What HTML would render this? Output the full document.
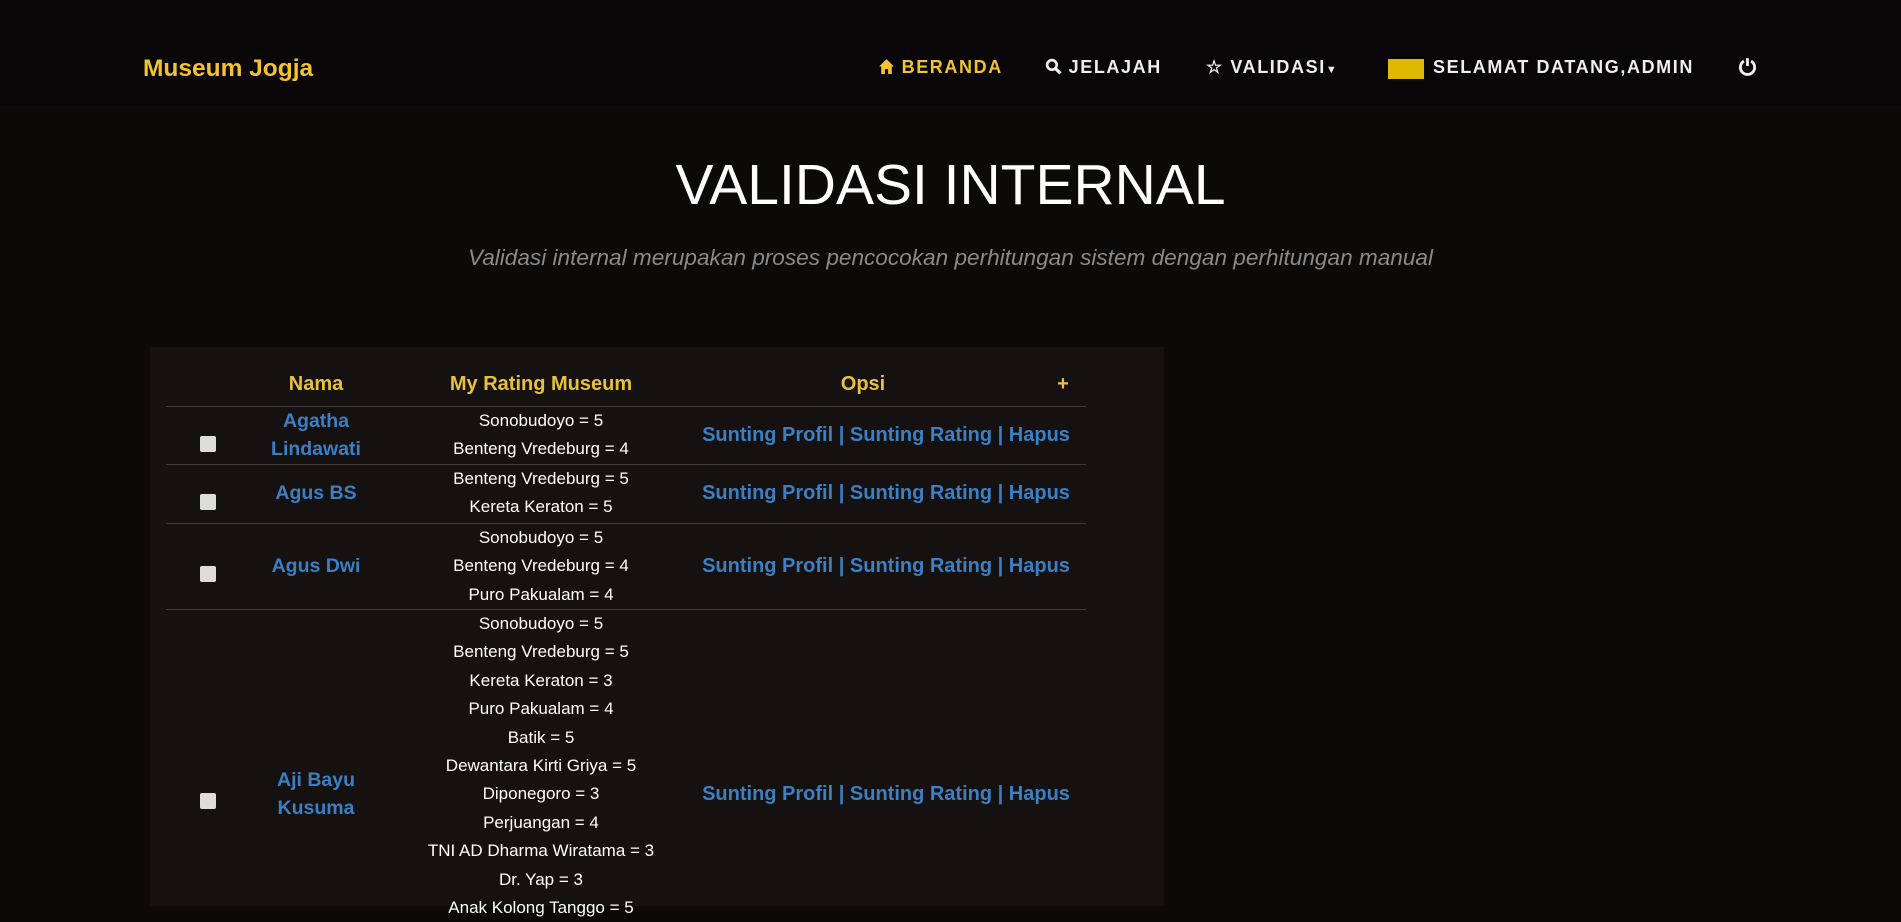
<!DOCTYPE html>
<html><head><meta charset="utf-8"><style>
*{margin:0;padding:0;box-sizing:border-box}
body{width:1901px;height:906px;overflow:hidden;background:#0c0909;font-family:"Liberation Sans",Arial,sans-serif;position:relative}
.top{position:absolute;left:0;top:0;width:1901px;height:105px;background:#080606}
.a{position:absolute;white-space:nowrap}
.brand{left:143px;top:55px;font-size:24.5px;font-weight:bold;color:#f2c230}
.nav{top:57px;font-size:18px;font-weight:bold;letter-spacing:1.6px;color:#eee}
h1{position:absolute;left:0;width:1901px;top:152px;text-align:center;font-weight:normal;font-size:57px;color:#fff}
.sub{left:0;width:1901px;text-align:center;top:245px;font-size:22.6px;font-style:italic;color:#8a8a8a}
.panel{position:absolute;left:150px;top:347px;width:1014px;height:559px;background:#151111}
.hd{top:373px;font-size:20px;font-weight:bold;color:#e8c13a;transform:translateX(-50%)}
.line{position:absolute;left:166px;width:920px;height:1px;background:#3e3a3a}
.row{position:absolute;left:166px;width:920px}
.cb{position:absolute;left:34px;width:16px;height:16px;background:#dcdcdc;border-radius:2px}
.nm{position:absolute;left:84px;width:132px;text-align:center;color:#3b7fc4;font-weight:bold;font-size:19.5px;line-height:28px}
.rt{position:absolute;left:216px;width:318px;text-align:center;color:#fff;font-size:17px;line-height:28.4px}
.op{position:absolute;left:520px;width:400px;text-align:center;color:#3b7fc4;font-weight:bold;font-size:20px;line-height:28px}
</style></head><body>
<div class="top"></div>
<div class="a brand">Museum Jogja</div>
<div class="a nav" style="left:878px;color:#f2c230"><svg width="17" height="17" viewBox="0 0 16 16" style="vertical-align:-2px"><path d="M8 1 L1 8 H3 V15 H6.5 V10.5 H9.5 V15 H13 V8 H15 Z" fill="#f2c230"/></svg> BERANDA</div>
<div class="a nav" style="left:1045px"><svg width="17" height="17" viewBox="0 0 16 16" style="vertical-align:-2px"><circle cx="6.5" cy="6.5" r="4.5" stroke="#eee" stroke-width="2.5" fill="none"/><path d="M10 10 L14.5 14.5" stroke="#eee" stroke-width="3"/></svg> JELAJAH</div>
<div class="a nav" style="left:1206px">☆ VALIDASI<span style="font-size:11px">▼</span></div>
<div class="a" style="left:1388px;top:59px;width:36px;height:20px;background:#e0b800"></div>
<div class="a nav" style="left:1433px">SELAMAT DATANG,ADMIN</div>
<div class="a nav" style="left:1738px"><svg width="19" height="19" viewBox="0 0 16 16"><path d="M5 3.5 A6 6 0 1 0 11 3.5" stroke="#eee" stroke-width="2.4" fill="none"/><path d="M8 1 V7.5" stroke="#eee" stroke-width="2.4"/></svg></div>
<h1>VALIDASI INTERNAL</h1>
<div class="a sub">Validasi internal merupakan proses pencocokan perhitungan sistem dengan perhitungan manual</div>
<div class="panel"></div>
<div class="a hd" style="left:316px">Nama</div>
<div class="a hd" style="left:541px">My Rating Museum</div>
<div class="a hd" style="left:863px">Opsi</div>
<div class="a hd" style="left:1063px">+</div>
<div class="line" style="top:406px"></div>
<div class="row" style="top:407px"><div class="cb" style="top:29px"></div><div class="nm">Agatha<br>Lindawati</div><div class="rt">Sonobudoyo = 5<br>Benteng Vredeburg = 4</div><div class="op" style="top:14px">Sunting Profil | Sunting Rating | Hapus</div></div>
<div class="line" style="top:464px"></div>
<div class="row" style="top:465px"><div class="cb" style="top:29px"></div><div class="nm" style="top:14px">Agus BS</div><div class="rt">Benteng Vredeburg = 5<br>Kereta Keraton = 5</div><div class="op" style="top:14px">Sunting Profil | Sunting Rating | Hapus</div></div>
<div class="line" style="top:523px"></div>
<div class="row" style="top:524px"><div class="cb" style="top:42px"></div><div class="nm" style="top:28px">Agus Dwi</div><div class="rt">Sonobudoyo = 5<br>Benteng Vredeburg = 4<br>Puro Pakualam = 4</div><div class="op" style="top:28px">Sunting Profil | Sunting Rating | Hapus</div></div>
<div class="line" style="top:609px"></div>
<div class="row" style="top:610px"><div class="cb" style="top:183px"></div><div class="nm" style="top:156px">Aji Bayu<br>Kusuma</div><div class="rt">Sonobudoyo = 5<br>Benteng Vredeburg = 5<br>Kereta Keraton = 3<br>Puro Pakualam = 4<br>Batik = 5<br>Dewantara Kirti Griya = 5<br>Diponegoro = 3<br>Perjuangan = 4<br>TNI AD Dharma Wiratama = 3<br>Dr. Yap = 3<br>Anak Kolong Tanggo = 5</div><div class="op" style="top:170px">Sunting Profil | Sunting Rating | Hapus</div></div>
</body></html>
